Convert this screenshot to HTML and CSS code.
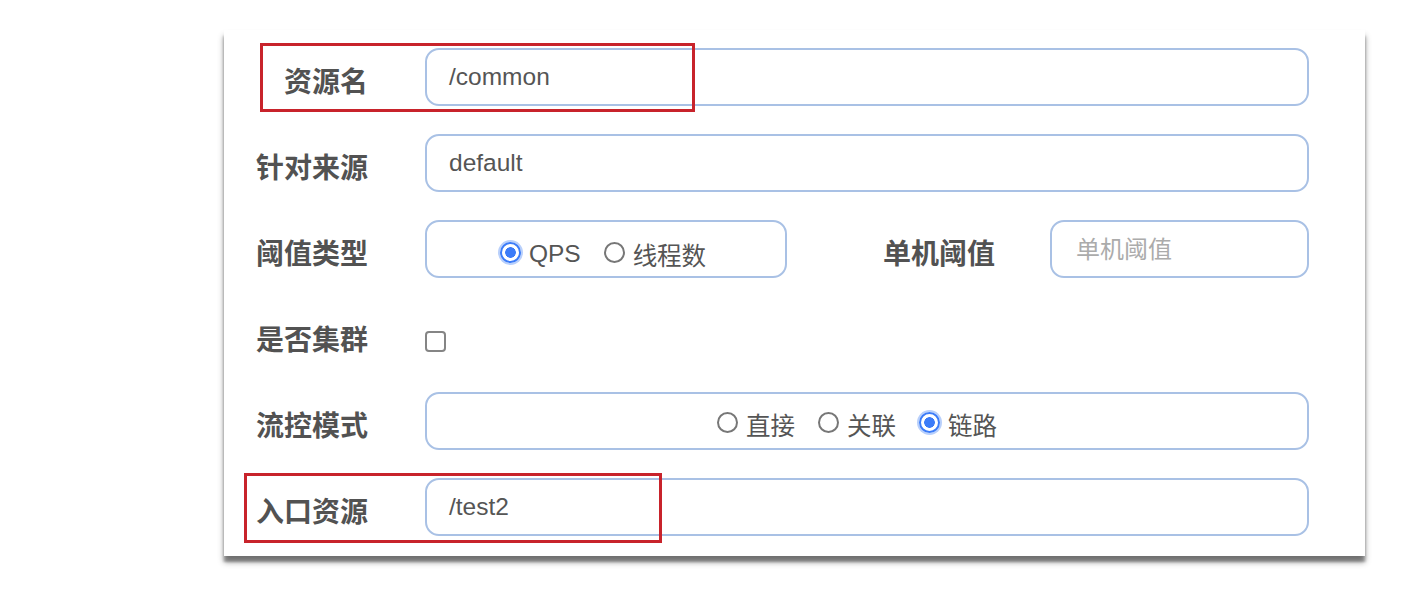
FILE: index.html
```html
<!DOCTYPE html>
<html lang="zh-CN">
<head>
<meta charset="utf-8">
<title>流控规则</title>
<link rel="stylesheet" href="styles.css">
</head>
<body>
<div class="card">
  <div class="row">
    <div class="label">资源名</div>
    <div class="field grow"><span class="value">/common</span></div>
  </div>
  <div class="row">
    <div class="label">针对来源</div>
    <div class="field grow"><span class="value">default</span></div>
  </div>
  <div class="row">
    <div class="label">阈值类型</div>
    <div class="field radio-box type-box">
      <span class="radio checked"></span><span class="opt">QPS</span>
      <span class="radio"></span><span class="opt">线程数</span>
    </div>
    <div class="label label-mid">单机阈值</div>
    <div class="field grow"><span class="placeholder">单机阈值</span></div>
  </div>
  <div class="row">
    <div class="label">是否集群</div>
    <span class="checkbox"></span>
  </div>
  <div class="row">
    <div class="label">流控模式</div>
    <div class="field radio-box grow mode-box">
      <span class="radio"></span><span class="opt">直接</span>
      <span class="radio"></span><span class="opt">关联</span>
      <span class="radio checked"></span><span class="opt">链路</span>
    </div>
  </div>
  <div class="row">
    <div class="label">入口资源</div>
    <div class="field grow"><span class="value">/test2</span></div>
  </div>
  <div class="mark mark-top"></div>
  <div class="mark mark-bottom"></div>
</div>
</body>
</html>
```
FILE: styles.css
```css
html, body {
  margin: 0;
  padding: 0;
  background: #ffffff;
}
body {
  font-family: "Liberation Sans", "Noto Sans CJK SC", sans-serif;
  width: 1427px;
  height: 591px;
  overflow: hidden;
}
.card {
  position: relative;
  margin: 30px 0 0 224px;
  width: 1141px;
  height: 526px;
  box-sizing: border-box;
  padding: 18px 56px 0 30px;
  background: #fff;
  box-shadow: 0 6px 6px rgba(0,0,0,0.42), 1px 6px 2px rgba(0,0,0,0.14), -1px 6px 2px rgba(0,0,0,0.14);
  display: flex;
  flex-direction: column;
  gap: 28px;
}
.row {
  display: flex;
  align-items: center;
  height: 58px;
}
.label {
  width: 114px;
  margin-right: 57px;
  text-align: right;
  font-family: "Noto Sans CJK SC", sans-serif;
  font-weight: 700;
  font-size: 28px;
  color: #525252;
  padding-top: 6px;
  white-space: nowrap;
}
.label-mid {
  width: 208px;
  margin-right: 55px;
}
.field {
  height: 58px;
  box-sizing: border-box;
  border: 2px solid #a9c1e5;
  border-radius: 14px;
  display: flex;
  align-items: center;
  padding-left: 22px;
  font-size: 24.5px;
  color: #555;
}
.grow {
  flex: 1;
}
.value {
  color: #555;
}
.placeholder {
  font-family: "Noto Sans CJK SC", sans-serif;
  color: #ababab;
  font-size: 24px;
  padding-left: 2px;
  margin-top: -4px;
}
.radio-box {
  justify-content: center;
  padding-left: 0;
  padding-top: 6px;
}
.type-box {
  width: 362px;
  padding-right: 6px;
}
.mode-box {
  padding-right: 20px;
  padding-top: 2px;
}
.radio {
  width: 21px;
  height: 21px;
  box-sizing: border-box;
  border-radius: 50%;
  border: 2px solid #777;
  background: #fff;
  margin-right: 8px;
  margin-top: 0;
  flex: none;
}
.radio.checked {
  border: 2px solid #3c7cf8;
  background: radial-gradient(circle, #3c7cf8 0 5px, #fff 5.6px);
  box-shadow: 0 0 0 2px #b9d0fb;
}
.opt {
  font-family: "Liberation Sans", "Noto Sans CJK SC", sans-serif;
  margin-right: 23px;
  padding-top: 4px;
  color: #555;
}
.opt:last-child {
  margin-right: 0;
}
.checkbox {
  width: 21px;
  height: 21px;
  box-sizing: border-box;
  border: 2px solid #858585;
  border-radius: 4px;
  background: #fff;
  margin-top: 12px;
}
.mark {
  position: absolute;
  border: 3px solid #c8232b;
  box-sizing: border-box;
}
.mark-top {
  left: 36px;
  top: 13px;
  width: 435px;
  height: 69px;
}
.mark-bottom {
  left: 20px;
  top: 443px;
  width: 418px;
  height: 70px;
}
```
